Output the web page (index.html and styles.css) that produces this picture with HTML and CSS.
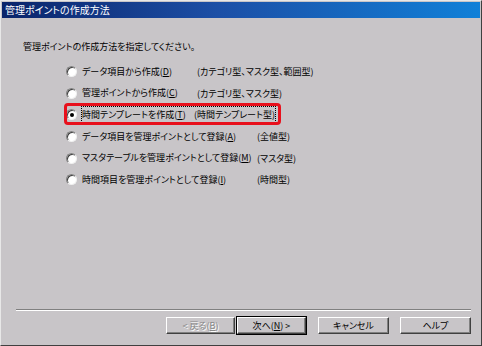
FILE: index.html
```html
<!DOCTYPE html>
<html lang="ja">
<head>
    <meta charset="UTF-8">
    <title>管理ポイントの作成方法</title>
    <link rel="stylesheet" href="styles.css">
</head>
<body>
    <div class="window">
        <div class="titlebar">管理ポイントの作成方法</div>

        <div class="dialog-body">
            <p class="prompt">管理ポイントの作成方法を指定してください。</p>

            <div class="options">
                <div class="option group-a">
                    <span class="radio"></span>
                    <span class="label">データ項目から作成(<u>D</u>)</span>
                    <span class="kind">(カテゴリ型、マスク型、範囲型)</span>
                </div>
                <div class="option group-a">
                    <span class="radio"></span>
                    <span class="label">管理ポイントから作成(<u>C</u>)</span>
                    <span class="kind">(カテゴリ型、マスク型)</span>
                </div>
                <div class="option group-a highlighted">
                    <span class="radio checked"></span>
                    <span class="focus">
                        <span class="label">時間テンプレートを作成(<u>T</u>)</span>
                        <span class="kind">(時間テンプレート型)</span>
                    </span>
                    <span class="mark"></span>
                </div>
                <div class="option group-b">
                    <span class="radio"></span>
                    <span class="label">データ項目を管理ポイントとして登録(<u>A</u>)</span>
                    <span class="kind">(全値型)</span>
                </div>
                <div class="option group-b">
                    <span class="radio"></span>
                    <span class="label">マスタテーブルを管理ポイントとして登録(<u>M</u>)</span>
                    <span class="kind">(マスタ型)</span>
                </div>
                <div class="option group-b">
                    <span class="radio"></span>
                    <span class="label">時間項目を管理ポイントとして登録(<u>I</u>)</span>
                    <span class="kind">(時間型)</span>
                </div>
            </div>

            <div class="separator"></div>

            <div class="buttons">
                <button class="btn back disabled">&lt; 戻る(<u>B</u>)</button>
                <button class="btn default">次へ(<u>N</u>) &gt;</button>
                <button class="btn wide">キャンセル</button>
                <button class="btn wide">ヘルプ</button>
            </div>
        </div>
    </div>
</body>
</html>
```

FILE: styles.css
```css
* {
    margin: 0;
    padding: 0;
    box-sizing: border-box;
}

body {
    font-family: "Noto Sans CJK JP", "Noto Sans", sans-serif;
    font-size: 9px;
    font-feature-settings: "palt";
    color: #000;
    background: #c8c5c8;
}

.window {
    width: 482px;
    height: 346px;
    background: #c8c5c8;
    border: 1px solid;
    border-color: #e8e8e8 #404040 #404040 #e8e8e8;
    padding: 1px;
    display: flex;
    flex-direction: column;
}

.titlebar {
    height: 16px;
    line-height: 16px;
    padding-left: 3px;
    color: #fff;
    font-size: 10px;
    background: linear-gradient(to right, #0a246a 0%, #1c4fa6 45%, #1080d8 100%);
}

.dialog-body {
    flex: 1;
    display: flex;
    flex-direction: column;
    padding: 0 9px 10px 12px;
}

.prompt {
    margin-top: 22px;
    margin-left: 9px;
    line-height: 14px;
}

.options {
    margin-top: 7px;
    padding-left: 52px;
}

.option {
    height: 21.6px;
    display: flex;
    align-items: center;
    position: relative;
}

.radio {
    width: 11px;
    height: 11px;
    border-radius: 50%;
    background: #fff;
    border: 1px solid;
    border-color: #808080 #f0f0f0 #f0f0f0 #808080;
    box-shadow: inset 1px 1px 0 #404040;
    margin-right: 5px;
    display: flex;
    align-items: center;
    justify-content: center;
    flex-shrink: 0;
}

.radio.checked::after {
    content: "";
    width: 4px;
    height: 4px;
    border-radius: 50%;
    background: #000;
}

.label {
    line-height: 12px;
    white-space: nowrap;
}

.group-a .label {
    width: 115px;
}

.group-b .label {
    width: 175px;
}

.kind {
    white-space: nowrap;
}

.focus {
    display: flex;
    align-items: center;
    border: 1px dotted #000;
    margin-left: -1px;
    padding: 1px 0;
    width: 195px;
}

.mark {
    position: absolute;
    left: -2px;
    top: -1px;
    width: 217px;
    height: 22px;
    border: 3px solid #e8101c;
    border-radius: 4px;
}

.separator {
    margin-top: auto;
    margin-left: 2px;
    height: 2px;
    border-top: 1px solid #808080;
    border-bottom: 1px solid #fff;
}

.buttons {
    margin-top: 6px;
    display: flex;
    justify-content: flex-end;
    gap: 11px;
}

.btn {
    font-family: inherit;
    font-size: 9px;
    font-feature-settings: "palt";
    width: 69px;
    height: 17px;
    background: #c8c5c8;
    color: #000;
    border: 1px solid;
    border-color: #fff #404040 #404040 #fff;
    box-shadow: inset -1px -1px 0 #808080;
}

.btn.wide {
    width: 71px;
}

.btn.back {
    margin-right: -9px;
}

.btn.disabled {
    color: #888;
    text-shadow: 1px 1px 0 #fff;
}

.btn.default {
    outline: 1px solid #000;
    margin-right: 1px;
}
```
